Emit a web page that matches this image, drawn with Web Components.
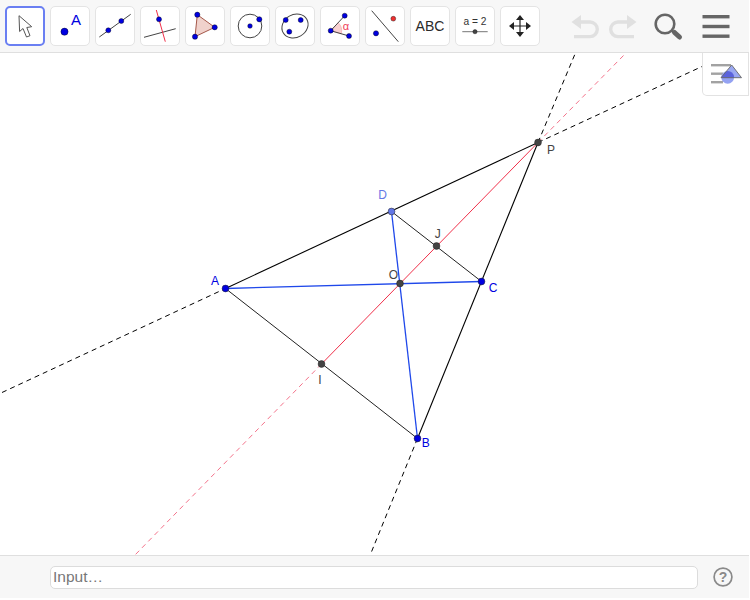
<!DOCTYPE html>
<html>
<head>
<meta charset="utf-8">
<title>Geometry</title>
<style>
  html, body { margin: 0; background: #fff; }
</style>
</head>
<body>
<gg-app>
  <gg-toolbar slot="top">
    <gg-tool icon="move" active></gg-tool>
    <gg-tool icon="point"></gg-tool>
    <gg-tool icon="line"></gg-tool>
    <gg-tool icon="perp"></gg-tool>
    <gg-tool icon="polygon"></gg-tool>
    <gg-tool icon="circle"></gg-tool>
    <gg-tool icon="conic"></gg-tool>
    <gg-tool icon="angle"></gg-tool>
    <gg-tool icon="reflect"></gg-tool>
    <gg-tool icon="text"></gg-tool>
    <gg-tool icon="slider"></gg-tool>
    <gg-tool icon="pan"></gg-tool>
  </gg-toolbar>
  <gg-canvas></gg-canvas>
  <gg-input-bar slot="bottom" placeholder="Input…"></gg-input-bar>
</gg-app>

<script>
// puntos de los iconos
const dot = (x, y, fill = '#0000e0', r = 2.9) => `<circle cx="${x}" cy="${y}" r="${r}" fill="${fill}" stroke="#000" stroke-width=".4"/>`
const seg = (x1, y1, x2, y2, stroke = '#444', w = 1) => `<line x1="${x1}" y1="${y1}" x2="${x2}" y2="${y2}" stroke="${stroke}" stroke-width="${w}"/>`

const ICONS = {
  move: `<path d="M14 9.7 L14.6 25.5 L18 22.5 L21.5 31 L25 29.7 L21.8 21.5 L26.7 20.7 Z" fill="#fff" stroke="#555" stroke-width="1" stroke-linejoin="round"/>`,
  point: `${dot(14.5, 25.7, '#0000e0', 3.6)}<text x="26" y="19" font-size="15" fill="#0000e0" text-anchor="middle">A</text>`,
  line: `${seg(4.3, 31, 35.7, 8.3)}${dot(13.3, 24.3, '#0000e0', 2.5)}${dot(26.3, 15, '#0000e0', 2.5)}`,
  perp: `${seg(4, 31.3, 35.7, 22.7)}${seg(16.3, 4, 25.3, 35.7, '#f0304a')}${dot(19, 13.3, '#0000e0', 2.5)}`,
  polygon: `<polygon points="12.3,8.7 29.7,21.3 10,30.7" fill="#f0d2cc" stroke="#a5584a" stroke-width="1"/>${dot(12.3, 8.7, '#0000e0', 2.6)}${dot(29.7, 21.3, '#0000e0', 2.6)}${dot(10, 30.7, '#0000e0', 2.6)}`,
  circle: `<circle cx="20" cy="20" r="11.8" fill="none" stroke="#444"/>${dot(20, 20, '#0000e0', 2.3)}${dot(29.3, 13.3, '#0000e0', 2.6)}`,
  conic: `<ellipse cx="20" cy="20" rx="13.6" ry="11.4" transform="rotate(-30 20 20)" fill="none" stroke="#444"/>${dot(10.7, 14, '#0000e0', 2.5)}${dot(25.7, 14, '#0000e0', 2.5)}${dot(14.3, 25.7, '#0000e0', 2.5)}`,
  angle: `<path d="M10.7 24.7 L18.2 16.7 A11 11 0 0 1 21.2 27.8 Z" fill="#f8d0d0" stroke="#f4a0a8" stroke-width=".6"/>${seg(10.7, 24.7, 24.7, 9.7)}${seg(10.7, 24.7, 29, 30)}${dot(10.7, 24.7, '#0000e0', 2.5)}${dot(24.7, 9.7, '#0000e0', 2.5)}${dot(29, 30, '#0000e0', 2.5)}<text x="26" y="23.5" font-size="11" fill="#f0405a" text-anchor="middle">α</text>`,
  reflect: `${seg(6.7, 4.7, 33.3, 35.7)}${dot(28.3, 12.7, '#f03030', 2.4)}${dot(11, 27.3, '#0000e0', 2.6)}`,
  text: `<text x="20" y="25" font-size="14" fill="#2a2a2a" text-anchor="middle">ABC</text>`,
  slider: `<text x="20" y="19.2" font-size="10.2" fill="#333" text-anchor="middle">a = 2</text>${seg(7.3, 25.7, 32.7, 25.7, '#777')}${dot(20, 25.7, '#444', 2.1)}`,
  pan: `<path d="M20 11 V29 M11 20 H29" stroke="#222" stroke-width="1.2"/><path d="M20 9 L24 14 H16 Z M20 31 L24 26 H16 Z M9 20 L14 16 V24 Z M31 20 L26 16 V24 Z" fill="#222"/>`
}

class GgApp extends HTMLElement {
  constructor() {
    super()
    this.attachShadow({ mode: 'open' }).innerHTML = `
      <style>
        :host { display: flex; flex-direction: column; width: 749px; height: 598px; font-family: "Liberation Sans", Arial, sans-serif; }
        .main { flex: 1; display: flex; min-height: 0; }
      </style>
      <slot name="top"></slot>
      <div class="main"><slot></slot></div>
      <slot name="bottom"></slot>`
  }
}

class GgTool extends HTMLElement {
  constructor() {
    super()
    this.attachShadow({ mode: 'open' }).innerHTML = `
      <style>
        :host { display: block; width: 40px; height: 40px; box-sizing: border-box; background: #fff; border: 1px solid #e4e4e4; border-radius: 5px; }
        :host([active]) { border: 2px solid #6a7ff2; }
        svg { display: block; width: 40px; height: 40px; margin: -1px; font-family: "Liberation Sans", Arial, sans-serif; }
        :host([active]) svg { margin: -2px; }
      </style>
      <svg viewBox="0 0 40 40">${ICONS[this.getAttribute('icon')] ?? ''}</svg>`
  }
}

class GgToolbar extends HTMLElement {
  constructor() {
    super()
    this.attachShadow({ mode: 'open' }).innerHTML = `
      <style>
        :host { display: flex; align-items: flex-start; height: 53px; box-sizing: border-box; padding: 6px 0 0 5px; background: #f7f7f7; border-bottom: 1.5px solid #dfdfdf; flex: none; }
        .tools { display: flex; gap: 5px; }
        .actions { display: flex; margin-left: auto; }
        svg { display: block; }
      </style>
      <div class="tools"><slot></slot></div>
      <div class="actions">
        <svg width="209" height="40" viewBox="540 6 209 40">
          <g fill="none" stroke="#e0e0e0" stroke-width="3.4">
            <path d="M578 22 H590 A7 7 0 0 1 590 36.6 H574"/>
            <path d="M630 22 H618 A7 7 0 0 0 618 36.6 H634"/>
          </g>
          <path d="M571.5 22 L581 15 V29 Z" fill="#e0e0e0"/>
          <path d="M636.5 22 L627 15 V29 Z" fill="#e0e0e0"/>
          <circle cx="665" cy="24" r="9.3" fill="none" stroke="#666" stroke-width="2.6"/>
          <line x1="672" y1="31" x2="674" y2="33" stroke="#666" stroke-width="2"/>
          <line x1="674.5" y1="32.5" x2="679.5" y2="37" stroke="#666" stroke-width="5" stroke-linecap="round"/>
          <g fill="#666">
            <rect x="702.5" y="15" width="27" height="3.4"/>
            <rect x="702.5" y="24.8" width="27" height="3.4"/>
            <rect x="702.5" y="34.5" width="27" height="3.4"/>
          </g>
        </svg>
      </div>`
  }
}

// construccion geometrica, en coordenadas de la pagina
const PTS = {
  A: [225.5, 288.5], B: [417.5, 438.5], C: [481.5, 281.5], D: [391.5, 211.5],
  P: [538, 142.5], O: [400, 283.5], I: [321.5, 364], J: [436.5, 246]
}
const L = (a, b, stroke, w, dash) => {
  const [x1, y1] = typeof a === 'string' ? PTS[a] : a
  const [x2, y2] = typeof b === 'string' ? PTS[b] : b
  return `<line x1="${x1}" y1="${y1}" x2="${x2}" y2="${y2}" stroke="${stroke}" stroke-width="${w}"${dash ? ` stroke-dasharray="${dash}"` : ''}/>`
}
const LABELS = [
  ['A', 211, 285, '#0000e0'], ['B', 421.7, 447, '#0000e0'], ['C', 488.8, 292, '#0000e0'],
  ['D', 378.2, 199, '#6478e6'], ['O', 388.8, 279, '#444'], ['J', 434.7, 238, '#444'],
  ['I', 318.3, 384, '#444'], ['P', 547, 154, '#444']
]

class GgCanvas extends HTMLElement {
  constructor() {
    super()
    const lines = [
      L([2, 392.5], 'A', '#000', 1, '5 4'),
      L('P', [702, 66.5], '#000', 1, '5 4'),
      L('P', [575, 54], '#000', 1, '5 4'),
      L('B', [371, 553], '#000', 1, '5 4'),
      L('I', [135, 555], '#f4728a', 1, '5 4'),
      L('P', [625, 54], '#f4728a', 1, '5 4'),
      L('A', 'P', '#000', 1.1),
      L('B', 'P', '#000', 1.1),
      L('A', 'B', '#222', 1),
      L('D', 'C', '#222', 1),
      L('I', 'P', '#f0304a', 1),
      L('A', 'C', '#1f48ea', 1.3),
      L('B', 'D', '#1f48ea', 1.3)
    ].join('')
    const color = { A: '#0000e0', B: '#0000e0', C: '#0000e0', D: '#6478e6' }
    const points = Object.entries(PTS).map(([n, [x, y]]) =>
      `<circle cx="${x}" cy="${y}" r="3.4" fill="${color[n] ?? '#444'}" stroke="#222" stroke-width=".5"/>`).join('')
    const labels = LABELS.map(([t, x, y, c]) => `<text x="${x}" y="${y}" fill="${c}">${t}</text>`).join('')
    this.attachShadow({ mode: 'open' }).innerHTML = `
      <style>
        :host { display: block; flex: 1; position: relative; background: #fff; overflow: hidden; }
        svg.board { display: block; width: 100%; height: 100%; font-family: "Liberation Sans", Arial, sans-serif; font-size: 12px; }
        .style-btn { position: absolute; top: 0; right: 0; width: 47px; height: 43px; box-sizing: border-box; background: #fff; border: 1px solid #e2e2e2; border-width: 0 1px 1px 1px; border-bottom-left-radius: 5px; }
        .style-btn svg { display: block; }
      </style>
      <svg class="board" viewBox="0 53 749 502">${lines}${points}${labels}</svg>
      <div class="style-btn">
        <svg width="46" height="43" viewBox="703 53 46 43">
          <defs><clipPath id="tri"><polygon points="731.7,65 741.5,77.7 721,77.7"/></clipPath></defs>
          <g fill="#a2a2a2">
            <rect x="711" y="64" width="20" height="2.4"/>
            <rect x="711" y="72.5" width="12" height="2.4"/>
            <rect x="711" y="81" width="12" height="2.4"/>
          </g>
          <polygon points="731.7,65 741.5,77.7 721,77.7" fill="#9aa8f2"/>
          <circle cx="727.7" cy="77.3" r="6.4" fill="#94a2f2"/>
          <circle cx="727.7" cy="77.3" r="6.4" fill="#5a62dc" clip-path="url(#tri)"/>
          <polygon points="731.7,65 741.5,77.7 721,77.7" fill="none" stroke="#666" stroke-width=".9"/>
        </svg>
      </div>`
  }
}

class GgInputBar extends HTMLElement {
  constructor() {
    super()
    this.attachShadow({ mode: 'open' }).innerHTML = `
      <style>
        :host { display: flex; align-items: center; flex: none; height: 43px; box-sizing: border-box; padding: 0 16px 0 50px; gap: 15px; background: #f7f7f7; border-top: 1.5px solid #dfdfdf; }
        .field { flex: 1; height: 23px; box-sizing: border-box; background: #fff; border: 1px solid #dcdcdc; border-radius: 5px; padding-left: 2px; font: 15.5px/20px "Liberation Sans", Arial, sans-serif; color: #777; }
        svg { display: block; flex: none; font-family: "Liberation Sans", Arial, sans-serif; }
      </style>
      <div class="field">${this.getAttribute('placeholder') ?? ''}</div>
      <svg width="20" height="20" viewBox="0 0 20 20">
        <circle cx="10" cy="10" r="8.9" fill="none" stroke="#8a8a8a" stroke-width="1.7"/>
        <text x="10" y="15" font-size="14" font-weight="bold" fill="#8a8a8a" text-anchor="middle">?</text>
      </svg>`
  }
}

customElements.define('gg-app', GgApp)
customElements.define('gg-tool', GgTool)
customElements.define('gg-toolbar', GgToolbar)
customElements.define('gg-canvas', GgCanvas)
customElements.define('gg-input-bar', GgInputBar)
</script>
</body>
</html>
